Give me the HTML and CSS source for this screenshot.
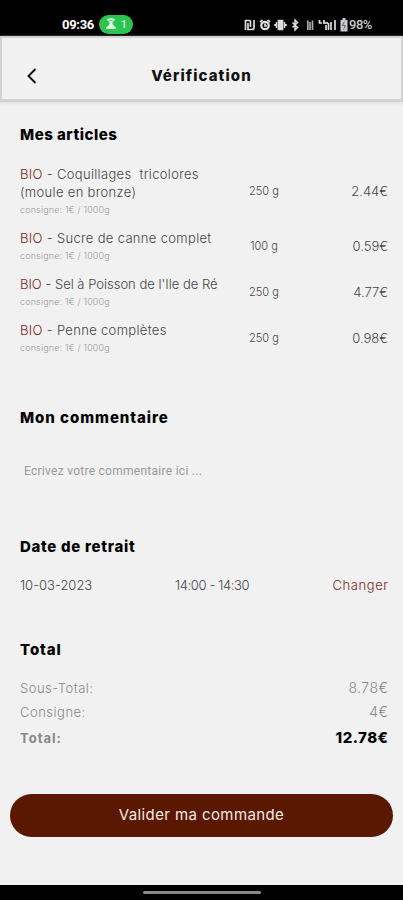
FILE: index.html
```html
<!DOCTYPE html>
<html lang="fr">
<head>
<meta charset="utf-8">
<meta name="viewport" content="width=device-width, initial-scale=1">
<title>Vérification</title>
<link rel="stylesheet" href="styles.css">
</head>
<body>
  <div class="status-bar">
    <span class="clock">09:36</span>
    <span class="hotspot">
      <svg width="12" height="12" viewBox="0 0 12 12" fill="#d9ffe0"><path d="M1.500 1.200Q6-.8 10.500 1.200L7.500 4.500V6L10 9H11V11H1V9H2L4.500 6V4.500Z"/><path d="M4 3Q6 2 8 3" fill="none" stroke="#3cc65c"/></svg>
      <span>1</span>
    </span>
    <div class="status-icons">
      <svg width="93" height="14" viewBox="0 0 93 14" fill="none" stroke="#ddd" stroke-width="1.700">
        <!-- nfc -->
        <path d="M1.500 12V2.500H5Q6.500 2.500 6.500 4V9M4 5V11.500H8Q10 11.500 10 9.500V2"/>
        <!-- alarm -->
        <circle cx="21" cy="7.500" r="3.700" stroke-width="2.300"/><path d="M16 4L18.500 1.800M26 4L23.500 1.800M21 5.500V8H23"/>
        <!-- vibrate -->
        <path d="M34.500 2.500H38.500V11.500H34.500Z" fill="#ddd"/><path d="M32.500 4V10M40.500 4V10M31 6V8M42 6V8" stroke-width="1.500"/>
        <!-- bluetooth -->
        <path d="M48.500 4.500L53.500 9.500L51 12V2L53.500 4.500L48.500 9.500" stroke-width="1.500"/>
        <!-- volte -->
        <path d="M63.800 2.500V12M66 4V12M68.500 2.500V12" stroke="#aaa" stroke-width="1.700"/>
        <!-- signal -->
        <path d="M75.500 2V5H78M80 2V5M82 7V12M84.500 5V12M87 4V12M91 2V12" stroke-width="1.700"/><path d="M79 5H84"/>
      </svg>
      <svg class="battery" width="8" height="14" viewBox="0 0 8 14"><path d="M2.500 0H5.500V2H7.500V13.500H.5V2H2.500Z" fill="#ccc"/><path d="M4.500 3.500L2.500 7.500H5.500L3.500 11.500" fill="none" stroke="#666"/></svg>
      <span class="percent">98%</span>
    </div>
  </div>

  <header class="header">
    <svg class="back" width="10" height="16" viewBox="0 0 10 16"><path d="M8.500 1L1.500 8L8.500 15" fill="none" stroke="#111" stroke-width="1.900"/></svg>
    <h1>Vérification</h1>
  </header>

  <main class="content">
    <h2>Mes articles</h2>
    <div class="articles">
      <div class="article">
        <div>
          <div class="name"><span class="bio">BIO</span> - Coquillages&nbsp; tricolores<br>(moule en bronze)</div>
          <div class="consigne">consigne: 1€ / 1000g</div>
        </div>
        <span class="weight">250 g</span>
        <span class="price">2.44€</span>
      </div>
      <div class="article">
        <div>
          <div class="name"><span class="bio">BIO</span> - Sucre de canne complet</div>
          <div class="consigne">consigne: 1€ / 1000g</div>
        </div>
        <span class="weight">100 g</span>
        <span class="price">0.59€</span>
      </div>
      <div class="article">
        <div>
          <div class="name name-long"><span class="bio">BIO</span> - Sel à Poisson de l'Ile de Ré</div>
          <div class="consigne">consigne: 1€ / 1000g</div>
        </div>
        <span class="weight">250 g</span>
        <span class="price">4.77€</span>
      </div>
      <div class="article">
        <div>
          <div class="name"><span class="bio">BIO</span> - Penne complètes</div>
          <div class="consigne">consigne: 1€ / 1000g</div>
        </div>
        <span class="weight">250 g</span>
        <span class="price">0.98€</span>
      </div>
    </div>

    <h2 class="title-comment">Mon commentaire</h2>
    <div class="comment">Ecrivez votre commentaire ici ...</div>

    <h2 class="title-date">Date de retrait</h2>
    <div class="pickup">
      <span class="day">10-03-2023</span>
      <span class="hours">14:00 - 14:30</span>
      <a class="change">Changer</a>
    </div>

    <h2 class="title-total">Total</h2>
    <div class="line"><span>Sous-Total:</span><span class="amount">8.78€</span></div>
    <div class="line"><span>Consigne:</span><span class="amount">4€</span></div>
    <div class="line line-total"><span>Total:</span><span class="amount">12.78€</span></div>
  </main>

  <button class="submit">Valider ma commande</button>

  <div class="nav-bar"><div class="nav-handle"></div></div>
</body>
</html>
```

FILE: styles.css
```css
*{
  box-sizing: border-box;
}
body{
  margin: 0;
  height: 900px;
  display: flex;
  flex-direction: column;
  background: #f1f1f1;
  color: #444;
  font-family: Inter, "Liberation Sans", sans-serif;
  font-weight: 300;
  overflow: hidden;
}
.status-bar{
  height: 36px;
  flex: none;
  padding: 13px 29px 0 62px;
  display: flex;
  align-items: center;
  background: #000;
  color: #fff;
  font-family: Roboto, sans-serif;
}
.clock{
  width: 37px;
  font-size: 13px;
  font-weight: 700;
  letter-spacing: -0.3px;
}
.hotspot{
  width: 34px;
  height: 19px;
  margin: -1px 0 0 0;
  padding: 0 6px;
  display: flex;
  align-items: center;
  justify-content: space-between;
  border-radius: 10px;
  background: #2bc44f;
  color: #d9ffe0;
  font-size: 11px;
  font-weight: 500;
}
.status-icons{
  margin-left: auto;
  display: flex;
  align-items: center;
}
.battery{
  margin-left: 3px;
}
.percent{
  width: 25px;
  margin-left: 1px;
  color: #ccc;
  font-size: 13px;
  font-weight: 500;
  letter-spacing: -0.5px;
}
.header{
  height: 66px;
  flex: none;
  padding: 14px 25px 0;
  display: grid;
  grid-template-columns: 10px 1fr 10px;
  align-items: center;
  border: 2px solid #d2d2d2;
  border-bottom-width: 3px;
  box-shadow: 0 1px 3px #ddd;
}
.header h1{
  margin: 0;
  text-align: center;
  color: #111;
  font-size: 15px;
  font-weight: 800;
  letter-spacing: 1.1px;
}
.content{
  padding: 24px 15px 0 20px;
}
h2{
  margin: 0;
  color: #000;
  font-size: 15px;
  line-height: 18px;
  font-weight: 800;
  letter-spacing: 0.5px;
}
.articles{
  margin-top: 21px;
  display: flex;
  flex-direction: column;
  gap: 12px;
}
.article{
  display: grid;
  grid-template-columns: 214px 60px 1fr;
  align-items: center;
}
.name{
  font-size: 13px;
  line-height: 18px;
  letter-spacing: 0.33px;
  white-space: nowrap;
}
.name-long{
  letter-spacing: 0;
}
.bio, .change{
  color: #7c2318;
}
.consigne{
  padding-top: 2px;
  color: #999;
  font-size: 9px;
  line-height: 14px;
  letter-spacing: 0.15px;
}
.weight{
  text-align: center;
  font-size: 11px;
}
.price{
  text-align: right;
  font-size: 13px;
}
.title-comment{
  margin-top: 54px;
  letter-spacing: 0.95px;
}
.comment{
  margin: 35px 0 0 4px;
  color: #999;
  font-family: Roboto, sans-serif;
  font-size: 12px;
  font-weight: 400;
  line-height: 18px;
  letter-spacing: 0.27px;
}
.title-date{
  margin-top: 58px;
  letter-spacing: 0.7px;
}
.pickup{
  margin-top: 20px;
  display: grid;
  grid-template-columns: 155px 80px 1fr;
  font-size: 13px;
  line-height: 18px;
}
.hours{
  letter-spacing: -0.38px;
  white-space: nowrap;
}
.change{
  text-align: right;
  letter-spacing: 0.6px;
  margin-right: -0.6px;
}
.title-total{
  margin-top: 47px;
  margin-bottom: 17px;
  letter-spacing: 0.9px;
}
.line{
  display: flex;
  justify-content: space-between;
  color: #888;
  font-size: 13px;
  line-height: 24px;
  letter-spacing: 0.5px;
}
.amount{
  font-size: 14px;
  margin-right: -0.5px;
}
.line-total{
  line-height: 28px;
  font-weight: 700;
  letter-spacing: 1px;
}
.line-total .amount{
  color: #000;
  font-size: 15px;
  font-weight: 800;
  letter-spacing: 0.5px;
}
.submit{
  height: 43px;
  flex: none;
  margin: auto 10px 48px;
  padding: 0 0 3px;
  border: 0;
  border-radius: 22px;
  background: #5b1800;
  color: #f5e9e5;
  font-family: inherit;
  font-size: 15px;
  font-weight: 400;
  letter-spacing: 0.4px;
}
.nav-bar{
  height: 15px;
  flex: none;
  display: flex;
  justify-content: center;
  align-items: center;
  background: #000;
}
.nav-handle{
  width: 118px;
  height: 3px;
  border-radius: 2px;
  background: #888;
}
```
